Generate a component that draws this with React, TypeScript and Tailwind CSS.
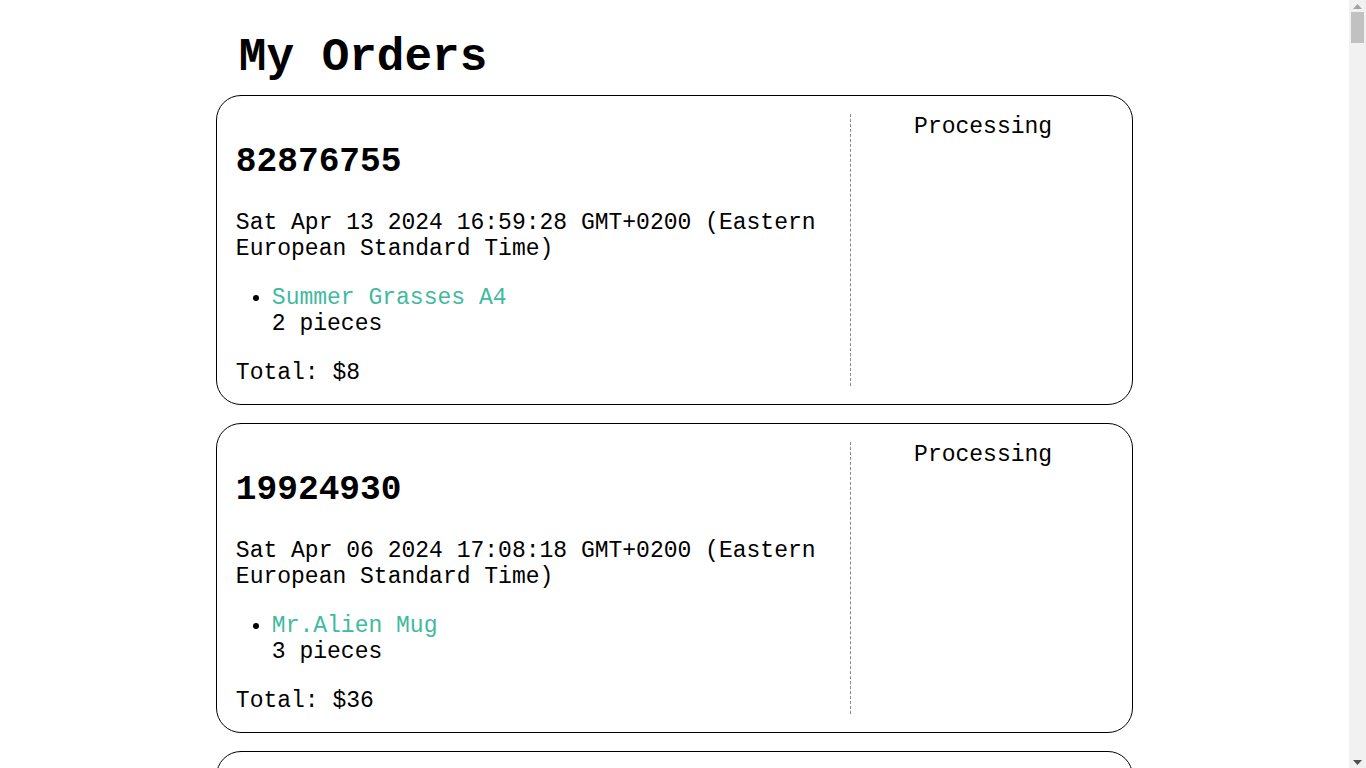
import React from "react";

type Order = {
  id: string;
  date: string;
  items: { name: string; qty: number }[];
  total: number;
  status: string;
};

const orders: Order[] = [
  {
    id: "82876755",
    date: "Sat Apr 13 2024 16:59:28 GMT+0200 (Eastern European Standard Time)",
    items: [{ name: "Summer Grasses A4", qty: 2 }],
    total: 8,
    status: "Processing",
  },
  {
    id: "19924930",
    date: "Sat Apr 06 2024 17:08:18 GMT+0200 (Eastern European Standard Time)",
    items: [{ name: "Mr.Alien Mug", qty: 3 }],
    total: 36,
    status: "Processing",
  },
  {
    id: "55310482",
    date: "Fri Apr 05 2024 11:42:07 GMT+0200 (Eastern European Standard Time)",
    items: [{ name: "Night Sky Poster", qty: 1 }],
    total: 12,
    status: "Delivered",
  },
];

function OrderCard({ order }: { order: Order }) {
  return (
    <div className="flex border border-black rounded-[25px] p-[18px] pr-[17px] mb-[18px] bg-white">
      <div className="w-[70%] border-r border-dashed border-[#888] pl-px">
        <h2 className="text-[34.5px] leading-[39px] font-bold mt-[28px] mb-[28.75px]">{order.id}</h2>
        <p className="leading-[26px] pr-4">{order.date}</p>
        <ul className="list-disc pl-[36px] mt-[23px] mb-[23px] leading-[26px]">
          {order.items.map((it) => (
            <li key={it.name}>
              <a className="text-[#3fba9e]">{it.name}</a>
              <div>{it.qty} pieces</div>
            </li>
          ))}
        </ul>
        <p className="leading-[26px]">Total: ${order.total}</p>
      </div>
      <div className="w-[30%] text-center leading-[26px]">{order.status}</div>
    </div>
  );
}

function Scrollbar() {
  return (
    <div className="w-[17px] h-screen bg-[#f1f1f1] flex flex-col items-center shrink-0">
      <div className="h-[12px] w-full flex items-center justify-center">
        <svg width="9" height="5" viewBox="0 0 9 5">
          <path d="M0 5 L4.5 0 L9 5 Z" fill="#a3a3a3" />
        </svg>
      </div>
      <div className="w-[13px] h-[31px] bg-[#c1c1c1]" />
      <div className="flex-1" />
      <div className="h-[12px] w-full flex items-center justify-center">
        <svg width="9" height="5" viewBox="0 0 9 5">
          <path d="M0 0 L9 0 L4.5 5 Z" fill="#505050" />
        </svg>
      </div>
    </div>
  );
}

export default function App() {
  return (
    <div
      className="h-screen overflow-hidden flex bg-white text-black text-[23px]"
      style={{ fontFamily: '"Liberation Mono", "Courier New", monospace' }}
    >
      <div className="flex-1 h-screen overflow-hidden">
        <div className="w-[68%] mx-auto pt-[32px] pb-8">
          <h1 className="text-[46px] leading-[52px] font-bold pl-[23px] mb-[11px]">My Orders</h1>
          {orders.map((o) => (
            <OrderCard key={o.id} order={o} />
          ))}
        </div>
      </div>
      <Scrollbar />
    </div>
  );
}
